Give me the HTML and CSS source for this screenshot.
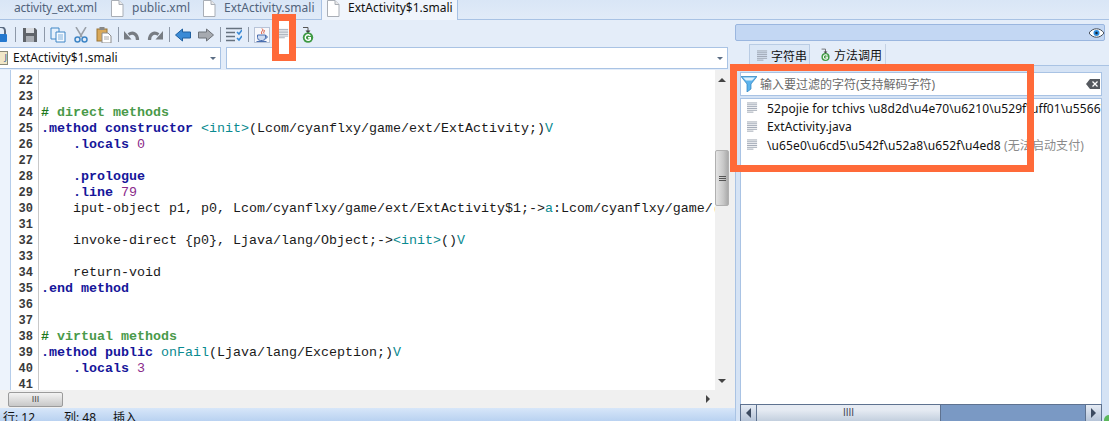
FILE: index.html
```html
<!DOCTYPE html>
<html lang="zh">
<head>
<meta charset="utf-8">
<title>ExtActivity$1.smali</title>
<link rel="stylesheet" href="styles.css">
</head>
<body>
<svg class="defs" width="0" height="0">
  <defs>
    <symbol id="file" viewBox="0 0 14 17"><path d="M1.500 .5h7.500l4 4v12h-11.500z" fill="#fff" stroke="#a9aeb6"/><path d="M9 .5v4h4" fill="#e8e8e8" stroke="#a9aeb6"/></symbol>
    <symbol id="lines" viewBox="0 0 12 12"><path d="M0 .5h11M0 2.500h11M0 4.500h11M0 6.500h11M0 8.500h11M0 10.500h7" stroke="#98a1ae" fill="none"/></symbol>
    <symbol id="gcall" viewBox="0 0 14 16"><path d="M2 .5h5v4" stroke="#555" fill="none"/><path d="M4.500 3.500h5l-2.500 3z" fill="#444"/><circle cx="7" cy="10.500" r="5.200" fill="#3f9a45"/><path d="M9.300 8.800a2.800 2.800 0 1 0 0 3.400v-1.500h-2.300" stroke="#fff" stroke-width="1.400" fill="none"/></symbol>
  </defs>
</svg>
<div class="app">
  <nav class="tabs">
    <div class="tab first">activity_ext.xml</div>
    <div class="tab"><svg class="fileicon"><use href="#file"/></svg>public.xml</div>
    <div class="tab"><svg class="fileicon"><use href="#file"/></svg>ExtActivity.smali</div>
    <div class="tab active"><svg class="fileicon"><use href="#file"/></svg>ExtActivity$1.smali</div>
  </nav>
  <div class="main">
    <section class="left">
      <div class="toolbar">
        <svg class="ic lock" viewBox="0 0 8 16"><path d="M-3 7V4a4 4 0 0 1 8 0v3" fill="none" stroke="#5a6a80" stroke-width="2"/><rect x="-6" y="7" width="13" height="8" rx="1" fill="#2478cf"/></svg>
        <i class="sep s1"></i>
        <svg class="ic" viewBox="0 0 16 16"><path d="M1 1h12l2 2v12H1z" fill="#5f6369"/><rect x="4" y="1" width="8" height="5" fill="#d8dbe0"/><rect x="4" y="9" width="8" height="6" fill="#a9adb3"/></svg>
        <i class="sep"></i>
        <svg class="ic" viewBox="0 0 16 16"><path d="M1 1h8v11H1z" fill="#e6f0fb" stroke="#3f86c6"/><path d="M6 5h9v10H6z" fill="#f6faff" stroke="#3f86c6"/><path d="M8 8h5M8 10h5M8 12h5" stroke="#7fb0dc"/></svg>
        <svg class="ic gap" viewBox="0 0 16 16"><path d="M3 0l6 10M13 0L7 10" stroke="#9aa0a8" stroke-width="1.500"/><circle cx="4.500" cy="12.500" r="2.500" fill="none" stroke="#3f86c6" stroke-width="1.500"/><circle cx="11.500" cy="12.500" r="2.500" fill="none" stroke="#3f86c6" stroke-width="1.500"/></svg>
        <svg class="ic gap" viewBox="0 0 16 16"><rect x="1" y="2" width="10" height="12" fill="#d9a95a" stroke="#9a7434"/><rect x="3.500" y="0" width="5" height="3" fill="#888"/><path d="M6 6h6l3 3v7H6z" fill="#fff" stroke="#8c8c8c"/><path d="M8 10h5M8 12h5" stroke="#aaa"/></svg>
        <i class="sep"></i>
        <svg class="ic" viewBox="0 0 16 16"><path d="M13.500 13C13.500 7 9 4.500 4.500 7.500" fill="none" stroke="#777c83" stroke-width="3.200"/><path d="M0 4l7.500 8.500H0z" fill="#777c83"/></svg>
        <svg class="ic gap" viewBox="0 0 16 16"><path d="M2.500 13C2.500 7 7 4.500 11.500 7.500" fill="none" stroke="#777c83" stroke-width="3.200"/><path d="M16 4l-7.500 8.500H16z" fill="#777c83"/></svg>
        <i class="sep"></i>
        <svg class="ic" viewBox="0 0 16 16"><path d="M.5 8l7-6v3h8v6h-8v3z" fill="#3a8ad6" stroke="#1f5f9f"/></svg>
        <svg class="ic gap" viewBox="0 0 16 16"><path d="M15.500 8l-7-6v3h-8v6h8v3z" fill="#a6aab0" stroke="#6d7278"/></svg>
        <i class="sep"></i>
        <svg class="ic" viewBox="0 0 16 16"><path d="M0 1.500h16M0 5.500h9M0 9.500h9M0 13.500h9" stroke="#66727f" stroke-width="1.300"/><path d="M11 5l2 2 3-4M11 11l2 2 3-4" fill="none" stroke="#3a8ad6" stroke-width="1.600"/></svg>
        <i class="sep"></i>
        <svg class="ic" viewBox="0 0 16 16"><rect x=".5" y=".5" width="15" height="15" fill="#f7f8fc" stroke="#b8c4d8"/><path d="M8 1.500c2.500 2-2 3 0 5.500M10 3c1 1.500-1 2 0 3.500" stroke="#d9482b" fill="none"/><path d="M3.500 8h8v2.500a3 3 0 0 1-3 3h-2a3 3 0 0 1-3-3z" fill="#cfdcf2" stroke="#4a6fb0"/><path d="M11.500 9h1.500v2h-2M2.500 14.500h10" fill="none" stroke="#4a6fb0"/></svg>
        <span class="lines-slot"></span>
        <svg class="ic gcallic"><use href="#gcall"/></svg>
      </div>
      <div class="combos">
        <div class="combo file-combo"><span class="jicon">J</span><span class="combo-text">ExtActivity$1.smali</span><i class="caret"></i></div>
        <div class="combo member-combo"><i class="caret"></i></div>
      </div>
      <div class="editor">
        <div class="strip"></div>
        <div class="nums">
          <div>22</div><div>23</div><div>24</div><div>25</div><div>26</div><div>27</div><div>28</div><div>29</div><div>30</div><div>31</div><div>32</div><div>33</div><div>34</div><div>35</div><div>36</div><div>37</div><div>38</div><div>39</div><div>40</div><div>41</div>
        </div>
        <pre class="code"><span class="ln"> </span>
<span class="ln"> </span>
<span class="ln"><b class="h">#</b><span class="c"> direct methods</span></span>
<span class="ln"><span class="k">.method constructor</span> <span class="t">&lt;init&gt;</span>(Lcom/cyanflxy/game/ext/ExtActivity;)<span class="t">V</span></span>
<span class="ln">    <span class="k">.locals</span> <span class="n">0</span></span>
<span class="ln"> </span>
<span class="ln">    <span class="k">.prologue</span></span>
<span class="ln">    <span class="k">.line</span> <span class="n">79</span></span>
<span class="ln">    iput-object p1, p0, Lcom/cyanflxy/game/ext/ExtActivity$1;-&gt;<span class="t">a</span>:Lcom/cyanflxy/game/(</span>
<span class="ln"> </span>
<span class="ln">    invoke-direct {p0}, Ljava/lang/Object;-&gt;<span class="t">&lt;init&gt;</span>()<span class="t">V</span></span>
<span class="ln"> </span>
<span class="ln">    return-void</span>
<span class="ln"><span class="k">.end method</span></span>
<span class="ln"> </span>
<span class="ln"> </span>
<span class="ln"><b class="h">#</b><span class="c"> virtual methods</span></span>
<span class="ln"><span class="k">.method public</span> <span class="t">onFail</span>(Ljava/lang/Exception;)<span class="t">V</span></span>
<span class="ln">    <span class="k">.locals</span> <span class="n">3</span></span>
<span class="ln"> </span></pre>
        <div class="vscroll">
          <i class="arrow up"></i>
          <div class="vthumb"><b></b><b></b><b></b></div>
          <i class="arrow down"></i>
        </div>
      </div>
      <div class="hscroll">
        <div class="hthumb">III</div>
        <i class="arrow aright"></i>
      </div>
      <footer class="status"><span class="st st1">行: 12</span><span class="st st2">列: 48</span><span class="st">插入</span></footer>
    </section>
    <aside class="right">
      <div class="topbar">
        <svg class="eye" viewBox="0 0 16 10"><path d="M0 5c4-6 12-6 16 0-4 6-12 6-16 0z" fill="#fff" stroke="#39414d"/><circle cx="8" cy="5" r="3.200" fill="#2f8fe0"/><circle cx="8" cy="5" r="1.300" fill="#123"/></svg>
      </div>
      <div class="rtabs">
        <div class="rtab on"><svg class="rtab-ic"><use href="#lines"/></svg>字符串</div>
        <div class="rtab second"><svg class="rtab-ic2"><use href="#gcall"/></svg>方法调用</div>
      </div>
      <div class="panel">
        <div class="filter">
          <svg class="funnel" viewBox="0 0 16 16"><path d="M0 .5h16L10 8v5l-4 3V8z" fill="#5cb3ec" stroke="#2a7fbe" stroke-width=".7"/><path d="M2 1.500h12l-3 3H5z" fill="#dff1fc"/></svg>
          <span class="ph">输入要过滤的字符(支持解码字符)</span>
          <svg class="clear" viewBox="0 0 14 10"><path d="M4 0h10v10H4L0 5z" fill="#55595f"/><path d="M6.500 2.500l5 5M11.500 2.500l-5 5" stroke="#fff" stroke-width="1.300"/></svg>
        </div>
        <ul class="list">
          <li><svg class="li-ic"><use href="#lines"/></svg><span>52pojie for tchivs \u8d2d\u4e70\u6210\u529f\uff01\u5566\u5566\u5566</span></li>
          <li><svg class="li-ic"><use href="#lines"/></svg><span>ExtActivity.java</span></li>
          <li><svg class="li-ic"><use href="#lines"/></svg><span>\u65e0\u6cd5\u542f\u52a8\u652f\u4ed8 <em>(无法启动支付)</em></span></li>
        </ul>
        <div class="rscroll">
          <div class="rbtn"><i class="arrow dleft"></i></div>
          <div class="rthumb">IIII</div>
          <div class="rtrack"></div>
          <div class="rbtn"><i class="arrow dright"></i></div>
        </div>
      </div>
    </aside>
  </div>
  <div class="mark mark-icon"><svg class="mark-lines"><use href="#lines"/></svg></div>
  <div class="mark mark-list"></div>
  <i class="corner"></i>
</div>
</body>
</html>
```
FILE: styles.css
```css
* { box-sizing: border-box; }
html, body { margin: 0; padding: 0; background: #e4edf9; }
.defs { position: absolute; }
.app { position: relative; width: 1109px; height: 421px; overflow: hidden; display: flex; flex-direction: column; background: #e4edf9; font-family: "Noto Sans", "Noto Sans CJK SC", sans-serif; font-size: 12px; color: #111; }

.tabs { height: 20px; flex: none; display: flex; align-items: stretch; background: linear-gradient(#d9e6f6, #e1ebf8); border-bottom: 1px solid #a8c2e4; font-size: 12px; color: #51637b; line-height: 15px; }
.tab { display: flex; gap: 8px; padding: 0 0 0 8px; border-right: 1px solid #a8c2e4; white-space: nowrap; }
.tab.first { width: 102px; padding-left: 14px; border-right: 0; letter-spacing: -.2px; }
.tab:nth-child(2) { width: 92px; border-right: 0; }
.tab:nth-child(3) { width: 128px; }
.tab.active { width: 136px; padding-left: 4px; background: #f0f5fc; color: #111; border-right: 1px solid #a8c2e4; height: 20px; }
.fileicon { width: 14px; height: 17px; flex: none; }

.main { flex: 1; min-height: 0; display: flex; }
.left { width: 735px; flex: none; display: flex; flex-direction: column; }
.toolbar { height: 26px; flex: none; display: flex; align-items: center; padding-top: 3px; }
.ic { width: 16px; height: 16px; flex: none; }
.ic.lock { width: 8px; }
.sep { width: 1px; height: 15px; background: #8d98a8; margin: 0 5px 0 6px; flex: none; }
.sep.s1 { margin-left: 7px; margin-right: 6px; }
.gap { margin-left: 7px; }
.lines-slot { width: 11px; margin-left: 11px; flex: none; }
.gcallic { width: 14px; height: 16px; margin-left: 9px; }

.combos { height: 24px; flex: none; display: flex; gap: 5px; padding: 1px 7px 1px 0; }
.combo { position: relative; height: 22px; background: #fff; border: 1px solid #a9c3e4; display: flex; align-items: center; }
.file-combo { width: 221px; border-left: 0; }
.member-combo { flex: 1; }
.jicon { width: 8px; height: 14px; background: #f1e7c8; border: 1px solid #8a8a7a; border-left: 0; font-size: 9px; line-height: 12px; text-align: right; color: #2a5a96; margin-right: 5px; }
.combo-text { line-height: 20px; }
.caret { margin-left: auto; margin-right: 4px; border: 3px solid transparent; border-top: 3px solid #5b6d84; border-bottom: 0; width: 0; height: 0; }

.editor { flex: 1; min-height: 0; display: flex; background: #fff; overflow: hidden; }
.strip { width: 11px; flex: none; background: #edf3fc; border-right: 1px solid #b5cdea; }
.nums { width: 28px; flex: none; padding: 3px 5px 0 0; text-align: right; font-family: "Liberation Mono", monospace; font-size: 12px; font-weight: 700; line-height: 16px; color: #3a3a3a; border-right: 1px solid #c9c9c9; }
.code { flex: 1; min-width: 0; margin: 0; padding: 3px 0 0 2px; overflow: hidden; font-family: "Liberation Mono", monospace; font-size: 13.33px; line-height: 16px; color: #1a1a1a; white-space: pre; }
.ln { display: inline-block; height: 16px; vertical-align: top; }
.k { color: #16169a; font-weight: 700; }
.h { color: #1f7a1f; }
.c { color: #4a9a4a; font-weight: 700; }
.t { color: #0a8a90; }
.n { color: #8a2a8a; }

.vscroll { width: 20px; flex: none; background: #f0f0f0; padding: 8px 6px 0 0; display: flex; flex-direction: column; align-items: center; }
.vthumb { width: 14px; height: 56px; margin-top: 68px; background: linear-gradient(90deg, #e4e4e4, #c8c8c8 60%, #aaa); border: 1px solid #b0b0b0; border-radius: 2px; display: flex; flex-direction: column; justify-content: center; align-items: center; gap: 1px; }
.vthumb b { width: 7px; height: 1px; background: #555; }
.arrow { display: block; width: 0; height: 0; border: 4px solid transparent; }
.arrow.up { border-top: 0; border-bottom-color: #444; }
.arrow.down { border-bottom: 0; border-top-color: #444; margin-top: auto; margin-bottom: 7px; }

.hscroll { height: 18px; flex: none; display: flex; align-items: center; background: #f0f0f0; padding: 0 25px 0 8px; }
.hthumb { width: 55px; height: 15px; background: linear-gradient(#f3f3f3, #c8c8c8); border: 1px solid #9b9b9b; border-radius: 2px; text-align: center; font-family: "Liberation Sans", sans-serif; font-size: 9px; line-height: 13px; color: #444; }
.arrow.aright { margin-left: auto; border-right: 0; border-left-color: #444; }

.status { flex: none; height: 13px; display: flex; background: linear-gradient(#d7e6f9, #b9d2f1); overflow: hidden; font-size: 12px; line-height: 20px; white-space: nowrap; padding-left: 3px; }
.st1 { width: 61px; }
.st2 { width: 49px; }

.right { flex: 1; min-width: 0; display: flex; flex-direction: column; }
.topbar { height: 17px; margin: 4px 4px 0 0; background: #c3d7f3; border: 1px solid #9ab6df; border-radius: 2px; display: flex; justify-content: flex-end; align-items: center; }
.eye { width: 15px; height: 10px; }
.rtabs { height: 24px; flex: none; display: flex; padding: 3px 0 0 14px; }
.rtab { height: 22px; display: flex; align-items: center; white-space: nowrap; font-size: 12px; }
.rtab.on { width: 61px; padding-left: 7px; gap: 3px; background: #dbe7f6; border: 1px solid #b9cce4; border-bottom: 0; }
.rtab.second { margin-left: 10px; gap: 3px; padding-right: 3px; border-right: 1px solid #c5d2e4; }
.rtab-ic { width: 11px; height: 12px; }
.rtab-ic2 { width: 11px; height: 14px; }

.panel { flex: 1; min-height: 0; display: flex; flex-direction: column; background: #d5e3f5; border-left: 1px solid #a9c3e4; border-top: 1px solid #a9c3e4; padding: 6px 7px 0 4px; }
.filter { height: 24px; flex: none; display: flex; align-items: center; background: #fff; border: 1px solid #a9c3e4; }
.funnel { width: 16px; height: 16px; margin-right: 3px; flex: none; }
.ph { color: #6b6b6b; font-size: 12px; }
.clear { width: 14px; height: 10px; margin-left: auto; margin-right: 1px; }
.list { flex: 1; min-height: 0; margin: 2px 0 0; padding: 0 0 0 6px; list-style: none; background: #fff; border: 1px solid #a9c3e4; border-bottom: 0; overflow: hidden; letter-spacing: .1px; }
.list li { height: 18.500px; display: flex; align-items: center; gap: 8px; white-space: nowrap; }
.list li svg + span { margin-left: 1px; }
.list em { font-style: normal; color: #8a8a8a; }
.li-ic { width: 11px; height: 12px; flex: none; }
.rscroll { height: 17px; flex: none; display: flex; background: #7a99c4; border: 1px solid #5e7290; border-bottom: 0; }
.rbtn { width: 16px; flex: none; background: linear-gradient(#e5ebf4, #b6c4d8); border-right: 1px solid #5e7290; display: flex; align-items: center; justify-content: center; }
.rbtn:last-child { border-right: 0; border-left: 1px solid #5e7290; }
.arrow.dleft { border-left: 0; border-right-color: #3c4a60; border-width: 5px; border-left-width: 0; }
.arrow.dright { border-right: 0; border-left-color: #3c4a60; border-width: 5px; border-right-width: 0; }
.rthumb { width: 184px; flex: none; background: linear-gradient(#e6ebf3 30%, #c3cfde); border-right: 1px solid #5e7290; text-align: center; font-family: "Liberation Sans", sans-serif; font-size: 10px; line-height: 16px; color: #445; }
.rtrack { flex: 1; }

.mark { position: absolute; border-style: solid; border-color: #ff6a39; }
.mark-icon { left: 272px; top: 14px; width: 24px; height: 47px; border-width: 7px; background: #fff; display: flex; padding-top: 7px; justify-content: center; }
.mark-lines { width: 10px; height: 12px; }
.mark-list { left: 730px; top: 64px; width: 304px; height: 108px; border-width: 7px; }
.corner { position: absolute; right: 0; bottom: 0; width: 5px; height: 6px; background: #5cb85c; border-radius: 5px 0 0 0; }
```
